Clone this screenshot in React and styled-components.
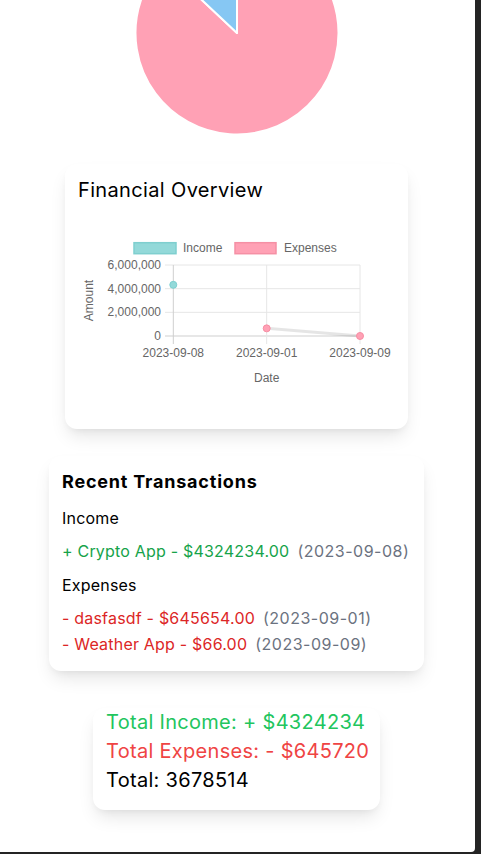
import React from 'react';
import styled, { createGlobalStyle } from 'styled-components';

const GlobalStyle = createGlobalStyle`
  html, body {
    margin: 0;
    padding: 0;
    background: #242424;
    font-family: Inter, "Noto Sans", sans-serif;
    overflow: hidden;
  }
`;

const Page = styled.div`
  width: 475px;
  height: 852px;
  background: #ffffff;
  border-radius: 0 0 4px 0;
  overflow: hidden;
  display: flex;
  flex-direction: column;
  align-items: center;
  padding-right: 2px;
  box-sizing: border-box;
`;

const PieWrap = styled.div`
  margin-top: -72px;
  display: flex;
  justify-content: center;
  width: 100%;
`;

const Card = styled.div`
  width: ${(p) => p.$width}px;
  box-sizing: border-box;
  background: #ffffff;
  border-radius: 12px;
  box-shadow: 0 10px 18px -3px rgba(0, 0, 0, 0.1), 0 4px 8px -4px rgba(0, 0, 0, 0.08);
  padding: ${(p) => p.$pad || '13px'};
  margin-top: ${(p) => p.$top}px;
`;

const ChartTitle = styled.h2`
  margin: 0;
  font-size: 20px;
  font-weight: 400;
  line-height: 30px;
  letter-spacing: 0.35px;
  color: #000;
`;

const ListTitle = styled.h3`
  margin: 0 0 11px;
  font-size: 18px;
  font-weight: 700;
  line-height: 27px;
  letter-spacing: 0.8px;
  color: #000;
`;

const Section = styled.div`
  margin: 0 0 9px;
  font-size: 16px;
  line-height: 24px;
  letter-spacing: 0.2px;
  color: #000;
`;

const List = styled.ul`
  list-style: none;
  margin: 0 0 10px;
  padding: 0;
  display: flex;
  flex-direction: column;
  gap: 2px;
  &:last-child {
    margin-bottom: 0;
  }
`;

const Item = styled.li`
  font-size: 16px;
  line-height: 24px;
  letter-spacing: 0.2px;
  white-space: nowrap;
  color: ${(p) => (p.$income ? '#16a34a' : '#dc2626')};
`;

const When = styled.span`
  margin-left: 8px;
  letter-spacing: 0.5px;
  color: #6b7280;
`;

const TotalLine = styled.div`
  font-size: 20px;
  line-height: 29px;
  letter-spacing: 0.3px;
  white-space: nowrap;
  color: ${(p) => p.$color};
`;

const axisText = { fontFamily: 'Liberation Sans, Arial, sans-serif', fontSize: 12, fill: '#666' };

const income = [{ name: 'Crypto App', amount: 4324234, date: '2023-09-08' }];
const expenses = [
  { name: 'dasfasdf', amount: 645654, date: '2023-09-01' },
  { name: 'Weather App', amount: 66, date: '2023-09-09' },
];

const Pie = () => {
  const cx = 102;
  const cy = 105;
  const r = 101.5;
  const total = 4324234 + 645720;
  const a = (645720 / total) * Math.PI * 2;
  const ex = cx - r * Math.sin(a);
  const ey = cy - r * Math.cos(a);
  return (
    <svg width="204" height="212" viewBox="0 0 204 212">
      <path d={`M${cx} ${cy} L${cx} ${cy - r} A${r} ${r} 0 1 1 ${ex} ${ey} Z`} fill="#ffa1b5" stroke="#fff" strokeWidth="2" strokeLinejoin="round" />
      <path d={`M${cx} ${cy} L${ex} ${ey} A${r} ${r} 0 0 1 ${cx} ${cy - r} Z`} fill="#86c7f3" stroke="#fff" strokeWidth="2" strokeLinejoin="round" />
    </svg>
  );
};

const LineChart = () => {
  // plot area in svg coords
  const xs = [95.3, 188.7, 282];
  const top = 60;
  const bottom = 131;
  const y = (v) => bottom - (v / 6000000) * (bottom - top);
  const ticks = [6000000, 4000000, 2000000, 0];
  return (
    <svg width="317" height="210" viewBox="0 0 317 210" style={{ display: 'block' }}>
      <rect x="56" y="37.7" width="42" height="11" fill="#93d9d9" stroke="#7fcfcf" strokeWidth="1.5" />
      <text x="105" y="47" {...axisText}>Income</text>
      <rect x="157" y="37.7" width="41" height="11" fill="#ffa1b5" stroke="#f590a5" strokeWidth="1.5" />
      <text x="206" y="47" {...axisText}>Expenses</text>

      {ticks.map((t) => (
        <g key={t}>
          <line x1="87" x2="282" y1={y(t)} y2={y(t)} stroke={t === 0 ? '#cfcfcf' : '#e6e6e6'} />
          <text x="83" y={y(t) + 4} textAnchor="end" {...axisText}>{t.toLocaleString('en-US')}</text>
        </g>
      ))}
      {xs.map((x, i) => (
        <line key={x} x1={x} x2={x} y1={top} y2={bottom + 8} stroke={i === 0 ? '#cfcfcf' : '#e6e6e6'} />
      ))}
      {['2023-09-08', '2023-09-01', '2023-09-09'].map((d, i) => (
        <text key={d} x={xs[i]} y="152" textAnchor="middle" {...axisText}>{d}</text>
      ))}
      <text x="188.7" y="177" textAnchor="middle" {...axisText}>Date</text>
      <text transform="translate(15 95.5) rotate(-90)" textAnchor="middle" {...axisText}>Amount</text>

      <line x1={xs[1]} y1={y(645654)} x2={xs[2]} y2={y(66)} stroke="rgba(0,0,0,0.1)" strokeWidth="3" />
      <circle cx={xs[0]} cy={y(4324234)} r="3.5" fill="#93d9d9" stroke="#7ccfcf" />
      <circle cx={xs[1]} cy={y(645654)} r="3.5" fill="#ffa1b5" stroke="#f78ea4" />
      <circle cx={xs[2]} cy={y(66)} r="3.5" fill="#ffa1b5" stroke="#f78ea4" />
    </svg>
  );
};

const App = () => (
  <>
    <GlobalStyle />
    <Page>
      <PieWrap>
        <Pie />
      </PieWrap>
      <Card $width={343} $top={24} $pad="11px 13px 14px">
        <ChartTitle>Financial Overview</ChartTitle>
        <LineChart />
      </Card>
      <Card $width={375} $top={27} $pad="12px 13px 15px">
        <ListTitle>Recent Transactions</ListTitle>
        <Section>Income</Section>
        <List>
          {income.map((t) => (
            <Item key={t.name} $income>
              + {t.name} - ${t.amount.toFixed(2)}
              <When>({t.date})</When>
            </Item>
          ))}
        </List>
        <Section>Expenses</Section>
        <List>
          {expenses.map((t) => (
            <Item key={t.name}>
              - {t.name} - ${t.amount.toFixed(2)}
              <When>({t.date})</When>
            </Item>
          ))}
        </List>
      </Card>
      <Card $width={287} $top={37} $pad="0 13px 15px">
        <TotalLine $color="#22c55e">Total Income: + $4324234</TotalLine>
        <TotalLine $color="#ef4444">Total Expenses: - $645720</TotalLine>
        <TotalLine $color="#000">Total: 3678514</TotalLine>
      </Card>
    </Page>
  </>
);

export default App;
